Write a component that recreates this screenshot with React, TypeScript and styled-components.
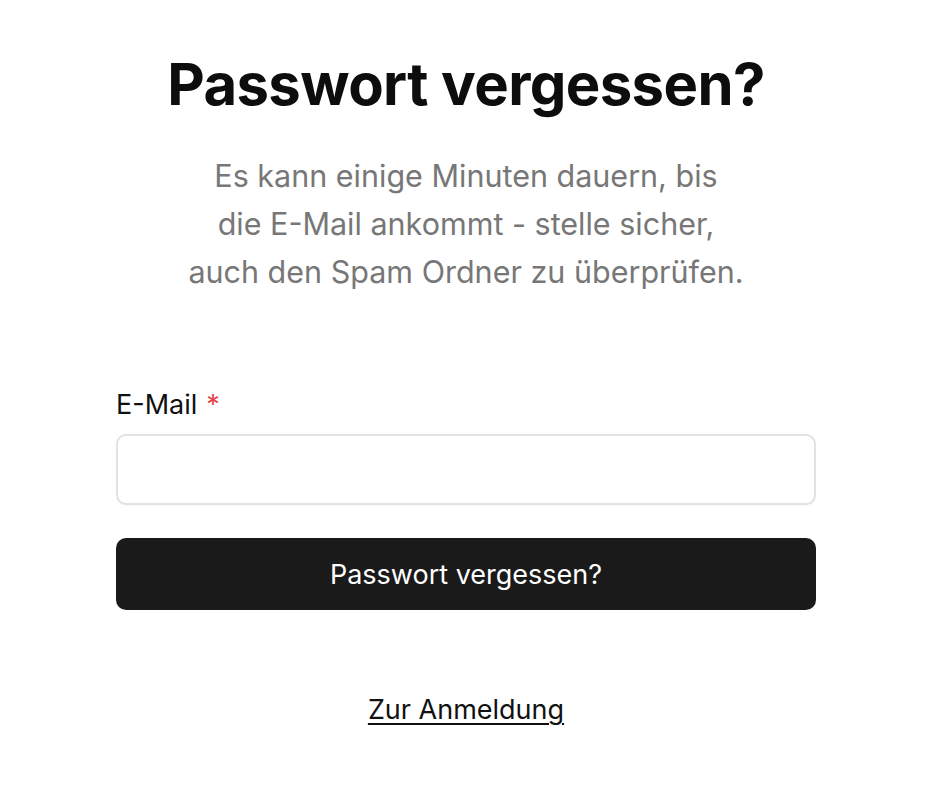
import React from "react";
import styled, { createGlobalStyle } from "styled-components";

const Global = createGlobalStyle`
  html, body { margin: 0; padding: 0; background: #fff; }
  body { font-family: Inter, "Noto Sans", sans-serif; -webkit-font-smoothing: antialiased; }
  * { box-sizing: border-box; }
`;

const Page = styled.main`
  width: 926px;
  padding-left: 6px;
  display: flex;
  flex-direction: column;
  align-items: center;
  padding-top: 51px;
`;

const Title = styled.h1`
  margin: 0;
  font-size: 58px;
  font-weight: 700;
  line-height: 66px;
  color: #0d0d0d;
  letter-spacing: -0.6px;
  text-align: center;
`;

const Subtitle = styled.p`
  margin: 35px 0 0;
  font-size: 30.5px;
  line-height: 48px;
  color: #777777;
  text-align: center;
`;

const Form = styled.form`
  width: 700px;
  margin-top: 92px;
  display: flex;
  flex-direction: column;
`;

const Label = styled.label`
  font-size: 27px;
  line-height: 34px;
  color: #111;
  margin-bottom: 12px;
`;

const Required = styled.span`
  color: #e0474c;
  margin-left: 9px;
`;

const Input = styled.input`
  height: 71px;
  border: 2px solid #e2e2e2;
  border-radius: 10px;
  padding: 0 18px;
  font-size: 26px;
  font-family: inherit;
  outline: none;
  box-shadow: 0 1px 2px rgba(0,0,0,0.04);
`;

const Button = styled.button`
  margin-top: 33px;
  height: 72px;
  border: none;
  border-radius: 10px;
  background: #1a1a1a;
  color: #fff;
  font-family: inherit;
  font-size: 27px;
  font-weight: 400;
  cursor: pointer;
`;

const LinkRow = styled.div`
  margin-top: 83px;
  display: flex;
  justify-content: center;
`;

const Link = styled.a`
  font-size: 27px;
  color: #111;
  text-decoration: underline;
  text-underline-offset: 4px;
  text-decoration-thickness: 2px;
`;

export default function App() {
  return (
    <>
      <Global />
      <Page>
        <Title>Passwort vergessen?</Title>
        <Subtitle>
          Es kann einige Minuten dauern, bis
          <br />
          die E-Mail ankommt - stelle sicher,
          <br />
          auch den Spam Ordner zu überprüfen.
        </Subtitle>
        <Form onSubmit={(e) => e.preventDefault()}>
          <Label htmlFor="email">
            E-Mail<Required>*</Required>
          </Label>
          <Input id="email" type="email" />
          <Button type="submit">Passwort vergessen?</Button>
        </Form>
        <LinkRow>
          <Link href="#">Zur Anmeldung</Link>
        </LinkRow>
      </Page>
    </>
  );
}
